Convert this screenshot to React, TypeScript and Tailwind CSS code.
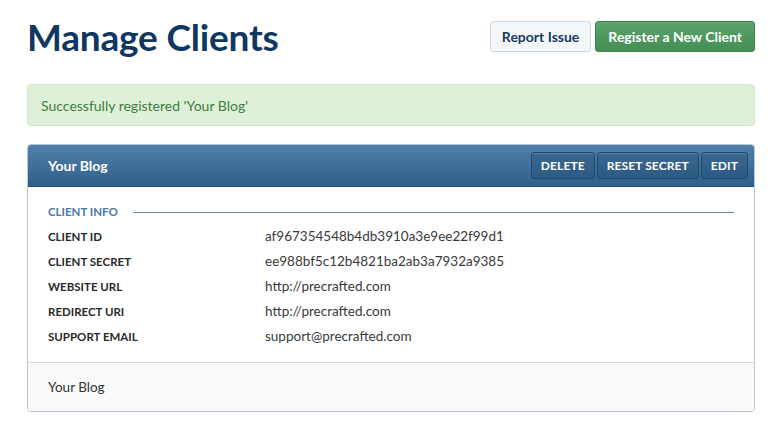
const rows: [string, string][] = [
  ['Client ID', 'af967354548b4db3910a3e9ee22f99d1'],
  ['Client Secret', 'ee988bf5c12b4821ba2ab3a7932a9385'],
  ['Website URL', 'http://precrafted.com'],
  ['Redirect URI', 'http://precrafted.com'],
  ['Support Email', 'support@precrafted.com'],
];

function HeaderButton({ label }: { label: string }) {
  return (
    <button
      type="button"
      className="h-[27px] px-[9px] rounded-[3px] border border-[#1f4a70] bg-gradient-to-b from-[#3a6890] to-[#2c5a82] text-[12px] font-bold uppercase tracking-[0.1px] text-white shadow-[inset_0_1px_0_rgba(255,255,255,0.15)]"
    >
      {label}
    </button>
  );
}

export default function App() {
  return (
    <div className="w-[780px] h-[440px] bg-white pl-[27px] pr-[25px] pt-[21px] font-['Lato','Liberation_Sans',sans-serif] text-[#333]">
      {/* Page header */}
      <div className="flex items-start justify-between">
        <h1 className="mt-[-4px] text-[37px] leading-[40px] font-bold tracking-[-0.2px] text-[#0f3761]">
          Manage Clients
        </h1>
        <div className="flex gap-[4px]">
          <button
            type="button"
            className="h-[31px] px-[11px] rounded-[3px] border border-[#cfdbe6] bg-[#f4f7fa] text-[14px] font-bold text-[#173a5e]"
          >
            Report Issue
          </button>
          <button
            type="button"
            className="h-[31px] px-[12px] rounded-[3px] border border-[#3f8550] bg-gradient-to-b from-[#5aa56b] to-[#448d55] text-[14px] font-bold text-white"
          >
            Register a New Client
          </button>
        </div>
      </div>

      {/* Flash message */}
      <div className="mt-[27px] h-[42px] flex items-center pl-[13px] rounded-[4px] border border-[#d2e8c8] bg-[#dff0d8] text-[14px] text-[#3f7d3f]">
        Successfully registered 'Your Blog'
      </div>

      {/* Client panel */}
      <div className="mt-[18px] rounded-[4px] border border-[#b9c6d3] overflow-hidden">
        <div className="h-[42px] flex items-center justify-between pl-[20px] pr-[6px] bg-gradient-to-b from-[#4f80aa] to-[#305f8b] border-b border-[#2a5279]">
          <span className="text-[14px] font-bold text-white">Your Blog</span>
          <div className="flex gap-[2px]">
            <HeaderButton label="Delete" />
            <HeaderButton label="Reset Secret" />
            <HeaderButton label="Edit" />
          </div>
        </div>

        <div className="pl-[20px] pr-[20px] pt-[16px] pb-[13px]">
          <div className="flex items-center gap-[15px] h-[18px]">
            <span className="text-[11.5px] font-bold uppercase text-[#4a7aa5]">Client Info</span>
            <div className="flex-1 h-px bg-[#6f8aa3]" />
          </div>
          <div className="mt-[3px] flex flex-col">
            {rows.map(([label, value]) => (
              <div key={label} className="flex items-center h-[25px]">
                <span className="w-[217px] text-[11.5px] font-bold uppercase text-[#2a2a2a]">{label}</span>
                <span className="text-[13.5px] text-[#3a3a3a]">{value}</span>
              </div>
            ))}
          </div>
        </div>

        <div className="h-[49px] flex items-center pl-[20px] border-t border-[#d3dbe3] bg-[#f9f9f9] text-[13.5px] text-[#333]">
          Your Blog
        </div>
      </div>
    </div>
  );
}
